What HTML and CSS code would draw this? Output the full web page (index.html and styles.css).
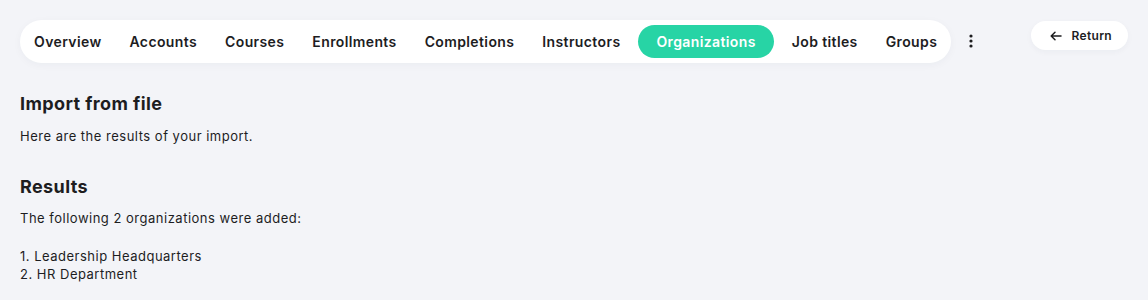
FILE: index.html
```html
<!DOCTYPE html>
<html lang="en">
<head>
    <meta charset="UTF-8">
    <meta name="viewport" content="width=device-width, initial-scale=1.0">
    <title>Import from file</title>
    <link rel="stylesheet" href="styles.css">
</head>
<body>

    <div class="topbar">
        <nav class="tabs">
            <a class="tab" href="#">Overview</a>
            <a class="tab" href="#">Accounts</a>
            <a class="tab" href="#">Courses</a>
            <a class="tab" href="#">Enrollments</a>
            <a class="tab" href="#">Completions</a>
            <a class="tab" href="#">Instructors</a>
            <a class="tab active" href="#">Organizations</a>
            <a class="tab" href="#">Job titles</a>
            <a class="tab" href="#">Groups</a>
        </nav>
        <button class="more" aria-label="More">
            <svg width="4" height="14" viewBox="0 0 4 14"><circle cx="2" cy="2" r="1.6"/><circle cx="2" cy="7" r="1.6"/><circle cx="2" cy="12" r="1.6"/></svg>
        </button>
        <button class="return-btn">
            <svg width="12" height="10" viewBox="0 0 12 10" fill="none" stroke="#1d1d1f" stroke-width="1.5" stroke-linecap="round" stroke-linejoin="round"><path d="M11 5H1.5M5 1.2L1.2 5 5 8.8"/></svg>
            Return
        </button>
    </div>

    <div class="content">
        <h2>Import from file</h2>
        <p class="intro">Here are the results of your import.</p>

        <h2 class="results-title">Results</h2>
        <p>The following 2 organizations were added:</p>
        <ol class="results">
            <li>1. Leadership Headquarters</li>
            <li>2. HR Department</li>
        </ol>
    </div>

</body>
</html>
```

FILE: styles.css
```css
body {
    margin: 0;
    padding: 20px;
    background: #f3f4f8;
    color: #1d1d1f;
    font-family: Inter, "Noto Sans", sans-serif;
}
.topbar {
    display: flex;
    align-items: flex-start;
}
.tabs {
    display: flex;
    align-items: center;
    height: 43px;
    background: #fff;
    border-radius: 22px;
    box-shadow: 0 2px 8px rgba(30, 40, 80, 0.04);
}
.tab {
    padding: 0 14px;
    font-size: 14px;
    font-weight: 600;
    letter-spacing: 0.38px;
    color: #1d1d1f;
    text-decoration: none;
    line-height: 33px;
    white-space: nowrap;
}
.tab.active {
    margin: 0 4px;
    padding: 0 18px;
    background: #27d4a5;
    color: #fff;
    border-radius: 17px;
}
.more {
    border: none;
    background: none;
    padding: 0;
    margin: 14px 0 0 18px;
    width: 4px;
    height: 14px;
    fill: #1d1d1f;
    display: flex;
}
.return-btn {
    margin: 1px 0 0 auto;
    display: flex;
    align-items: center;
    gap: 10px;
    height: 29px;
    padding: 0 16px 0 19px;
    border: none;
    background: #fff;
    border-radius: 15px;
    font-family: inherit;
    font-size: 12px;
    font-weight: 600;
    letter-spacing: 0.3px;
    color: #1d1d1f;
    box-shadow: 0 2px 6px rgba(30, 40, 80, 0.04);
}
.content {
    padding-top: 29px;
}
.content h2 {
    margin: 0;
    font-size: 18px;
    font-weight: 700;
    letter-spacing: 0.4px;
    line-height: 24px;
}
.content p {
    margin: 10px 0 0;
    font-size: 13px;
    letter-spacing: 0.5px;
    line-height: 18px;
}
.content .intro {
    margin-top: 11px;
}
.content .results-title {
    margin-top: 30px;
}
.results {
    list-style: none;
    margin: 20px 0 0;
    padding: 0;
    font-size: 13px;
    letter-spacing: 0.5px;
    line-height: 18px;
}
```
